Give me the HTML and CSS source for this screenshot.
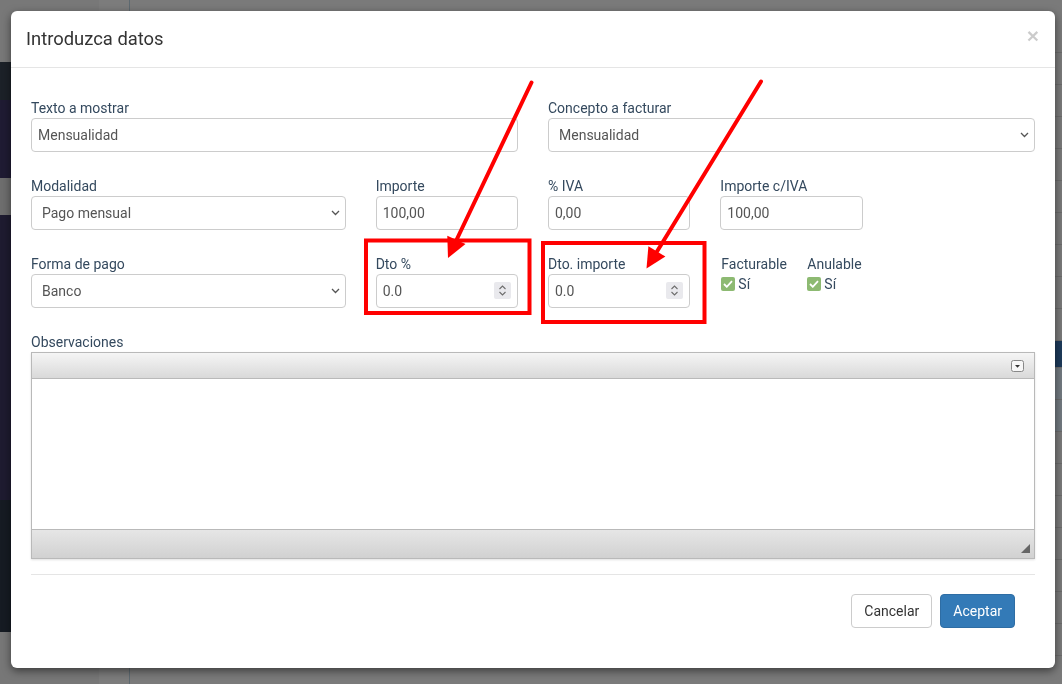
FILE: index.html
```html
<!DOCTYPE html>
<html lang="es">
<head>
  <meta charset="UTF-8">
  <meta name="viewport" content="width=device-width, initial-scale=1.0">
  <title>Introduzca datos</title>
  <link rel="stylesheet" href="styles.css">
</head>
<body>

  <div class="page">
    <aside class="sidebar">
      <div class="sb-top"></div>
      <div class="sb-head"></div>
      <div class="sb-user"></div>
      <div class="sb-search"></div>
      <div class="sb-menu"></div>
      <div class="sb-menu-dark"></div>
      <div class="sb-foot"></div>
    </aside>
    <div class="gutter"></div>
    <main class="content">
      <div class="row first"></div>
      <div class="row"></div>
      <div class="row"></div>
      <div class="row"></div>
      <div class="row"></div>
      <div class="row"></div>
      <div class="row"></div>
      <div class="row"></div>
      <div class="row"></div>
      <div class="row"></div>
      <div class="row active"></div>
      <div class="row light"></div>
      <div class="row light"></div>
      <div class="row"></div>
      <div class="row"></div>
      <div class="row"></div>
      <div class="row"></div>
      <div class="row"></div>
      <div class="row"></div>
      <div class="row"></div>
    </main>
  </div>

  <div class="backdrop">
    <div class="modal">
      <div class="modal-header">
        <h4 class="modal-title">Introduzca datos</h4>
        <button class="close">&times;</button>
      </div>

      <div class="modal-body">
        <div class="form-grid">
          <div class="field span-6">
            <label>Texto a mostrar</label>
            <input class="input" type="text" value="Mensualidad">
          </div>
          <div class="field span-6">
            <label>Concepto a facturar</label>
            <div class="select">
              <span>Mensualidad</span>
              <svg width="9" height="6" viewBox="0 0 9 6"><path d="M1 1l3.5 3.5L8 1" fill="none" stroke="#555" stroke-width="1.3"/></svg>
            </div>
          </div>

          <div class="field span-4">
            <label>Modalidad</label>
            <div class="select">
              <span>Pago mensual</span>
              <svg width="9" height="6" viewBox="0 0 9 6"><path d="M1 1l3.5 3.5L8 1" fill="none" stroke="#555" stroke-width="1.3"/></svg>
            </div>
          </div>
          <div class="field span-2">
            <label>Importe</label>
            <input class="input" type="text" value="100,00">
          </div>
          <div class="field span-2">
            <label>% IVA</label>
            <input class="input" type="text" value="0,00">
          </div>
          <div class="field span-2">
            <label>Importe c/IVA</label>
            <input class="input" type="text" value="100,00">
          </div>
          <div class="span-2"></div>

          <div class="field span-4">
            <label>Forma de pago</label>
            <div class="select">
              <span>Banco</span>
              <svg width="9" height="6" viewBox="0 0 9 6"><path d="M1 1l3.5 3.5L8 1" fill="none" stroke="#555" stroke-width="1.3"/></svg>
            </div>
          </div>
          <div class="field span-2">
            <label>Dto %</label>
            <div class="input number">
              <span>0.0</span>
              <svg width="17" height="17" viewBox="0 0 17 17"><rect width="17" height="17" rx="2" fill="#e9e9ed"/><path d="M5.5 7l3-3 3 3M5.5 10l3 3 3-3" fill="none" stroke="#6d6d6d" stroke-width="1.1"/></svg>
            </div>
          </div>
          <div class="field span-2">
            <label>Dto. importe</label>
            <div class="input number">
              <span>0.0</span>
              <svg width="17" height="17" viewBox="0 0 17 17"><rect width="17" height="17" rx="2" fill="#e9e9ed"/><path d="M5.5 7l3-3 3 3M5.5 10l3 3 3-3" fill="none" stroke="#6d6d6d" stroke-width="1.1"/></svg>
            </div>
          </div>
          <div class="checks span-4">
            <div class="check-item">
              <label>Facturable</label>
              <div class="check-line">
                <span class="tick"><svg width="10" height="8" viewBox="0 0 10 8"><path d="M1 4l2.8 2.8L9 1.2" fill="none" stroke="#fff" stroke-width="1.8"/></svg></span>
                Sí
              </div>
            </div>
            <div class="check-item">
              <label>Anulable</label>
              <div class="check-line">
                <span class="tick"><svg width="10" height="8" viewBox="0 0 10 8"><path d="M1 4l2.8 2.8L9 1.2" fill="none" stroke="#fff" stroke-width="1.8"/></svg></span>
                Sí
              </div>
            </div>
          </div>

          <div class="field span-12">
            <label>Observaciones</label>
            <div class="editor">
              <div class="editor-toolbar">
                <svg width="13" height="12" viewBox="0 0 13 12"><rect x=".5" y=".5" width="12" height="11" rx="2" fill="#f7f7f7" stroke="#888"/><path d="M4 5h5L6.5 7.8z" fill="#333"/></svg>
              </div>
              <div class="editor-area"></div>
              <div class="editor-bottom">
                <svg width="9" height="9" viewBox="0 0 9 9"><path d="M9 0v9H0z" fill="#666"/></svg>
              </div>
            </div>
          </div>
        </div>
        <hr>
      </div>

      <div class="modal-footer">
        <button class="btn btn-default">Cancelar</button>
        <button class="btn btn-primary">Aceptar</button>
      </div>
    </div>
  </div>

  <!-- anotaciones en rojo -->
  <svg class="notes" width="1062" height="684" viewBox="0 0 1062 684">
    <g fill="none" stroke="#ff0000" stroke-width="4">
      <rect x="366" y="240.5" width="163.5" height="72.5"/>
      <rect x="543" y="243" width="161.5" height="79"/>
      <path d="M531.5 82.5L456 241M761 81.5L657 251.5" stroke-linecap="round"/>
    </g>
    <g fill="#ff0000">
      <polygon points="448,258 465.5,244.1 447.3,235.7"/>
      <polygon points="646.5,268.5 665.4,256.6 648.4,246.2"/>
    </g>
  </svg>

</body>
</html>
```

FILE: styles.css
```css
* {
  box-sizing: border-box;
}
html, body {
  margin: 0;
  padding: 0;
  height: 100%;
  overflow: hidden;
  font-family: Roboto, "Liberation Sans", sans-serif;
}
body {
  background: #7a7a7a;
}

/* pagina de fondo (ya oscurecida por el modal) */
.page {
  display: flex;
  height: 684px;
}
.sidebar {
  width: 99px;
  display: flex;
  flex-direction: column;
}
.sb-top { height: 62px; background: #787878; }
.sb-head { height: 38px; background: #1c2128; }
.sb-user { height: 78px; background: #1f1b33; }
.sb-search { height: 37px; background: #6e6e6e; }
.sb-menu { height: 285px; background: #1e1b30; }
.sb-menu-dark { height: 132px; background: #161b23; }
.sb-foot { flex: 1; background: #777; }

.gutter {
  width: 31px;
  background: #7c7c7c;
  border-right: 1px solid #5d6970;
}
.content {
  flex: 1;
  display: flex;
  flex-direction: column;
  background: #7a7a7a;
}
.content .row {
  height: 32px;
  border-bottom: 1px solid #6c6c6c;
  flex-shrink: 0;
}
.content .row.first { height: 53px; }
.content .row.active { height: 27px; background: #1d3a5a; }
.content .row.light { background: #727a80; }

/* modal */
.backdrop {
  position: fixed;
  inset: 0;
}
.modal {
  width: 1044px;
  height: 657px;
  margin: 11px 0 0 11px;
  background: #fff;
  border-radius: 6px;
  box-shadow: 0 3px 9px rgba(0, 0, 0, 0.5);
  display: flex;
  flex-direction: column;
}
.modal-header {
  display: flex;
  justify-content: space-between;
  align-items: center;
  padding: 15px;
  border-bottom: 1px solid #e5e5e5;
}
.modal-title {
  margin: 0;
  font-size: 18.4px;
  font-weight: 400;
  line-height: 26px;
  color: #333;
}
.close {
  background: none;
  border: 0;
  padding: 0 1px 0 0;
  margin-top: -8px;
  font-family: "Liberation Sans", sans-serif;
  font-size: 21px;
  font-weight: 700;
  line-height: 1;
  color: #000;
  opacity: 0.2;
}

.modal-body {
  padding: 30px 20px 0;
}
.form-grid {
  display: grid;
  grid-template-columns: repeat(12, 1fr);
  column-gap: 30px;
  row-gap: 24px;
}
.span-2 { grid-column: span 2; }
.span-4 { grid-column: span 4; }
.span-6 { grid-column: span 6; }
.span-12 { grid-column: span 12; }

label {
  display: block;
  font-size: 14px;
  line-height: 20px;
  color: #34495e;
}

.input, .select {
  width: 100%;
  height: 34px;
  border: 1px solid #ccc;
  border-radius: 4px;
  font-family: Roboto, "Liberation Sans", sans-serif;
  font-size: 14px;
  color: #555;
  background: #fff;
}
.input {
  padding: 0 6px;
}
.select {
  display: flex;
  align-items: center;
  justify-content: space-between;
  padding: 0 5px 0 10px;
}
.number {
  display: flex;
  align-items: center;
  justify-content: space-between;
  padding-right: 6px;
}
.number svg {
  margin-top: -1px;
}

.checks {
  display: flex;
  padding-left: 1px;
}
.check-item {
  width: 86px;
}
.check-line {
  display: flex;
  align-items: center;
  gap: 3px;
  font-size: 14px;
  line-height: 20px;
  color: #34495e;
}
.tick {
  width: 14px;
  height: 14px;
  border-radius: 2px;
  background: #8dba72;
  display: flex;
  align-items: center;
  justify-content: center;
}

.editor {
  border: 1px solid #b9b9b9;
  box-shadow: 0 1px 2px rgba(0, 0, 0, 0.12);
}
.editor-toolbar {
  height: 26px;
  border-bottom: 1px solid #b9b9b9;
  background: linear-gradient(#f5f5f5, #d9d9d9);
  display: flex;
  align-items: center;
  justify-content: flex-end;
  padding-right: 10px;
}
.editor-area {
  height: 150px;
  background: #fff;
}
.editor-bottom {
  height: 29px;
  border-top: 1px solid #b9b9b9;
  background: linear-gradient(#e6e6e6, #d1d1d1);
  display: flex;
  align-items: flex-end;
  justify-content: flex-end;
  padding: 0 4px 5px 0;
}

hr {
  margin: 15px 0 0;
  border: 0;
  border-top: 1px solid #e5e5e5;
  height: 0;
}

.modal-footer {
  display: flex;
  justify-content: flex-end;
  gap: 8px;
  padding: 19px 40px 0 20px;
}
.btn {
  height: 34px;
  padding: 0 12px;
  border: 1px solid;
  border-radius: 4px;
  font-family: Roboto, "Liberation Sans", sans-serif;
  font-size: 14px;
  line-height: 32px;
}
.btn-default {
  background: #fff;
  border-color: #ccc;
  color: #333;
}
.btn-primary {
  background: #337ab7;
  border-color: #2e6da4;
  color: #fff;
}

.notes {
  position: absolute;
  top: 0;
  left: 0;
  pointer-events: none;
}
```
